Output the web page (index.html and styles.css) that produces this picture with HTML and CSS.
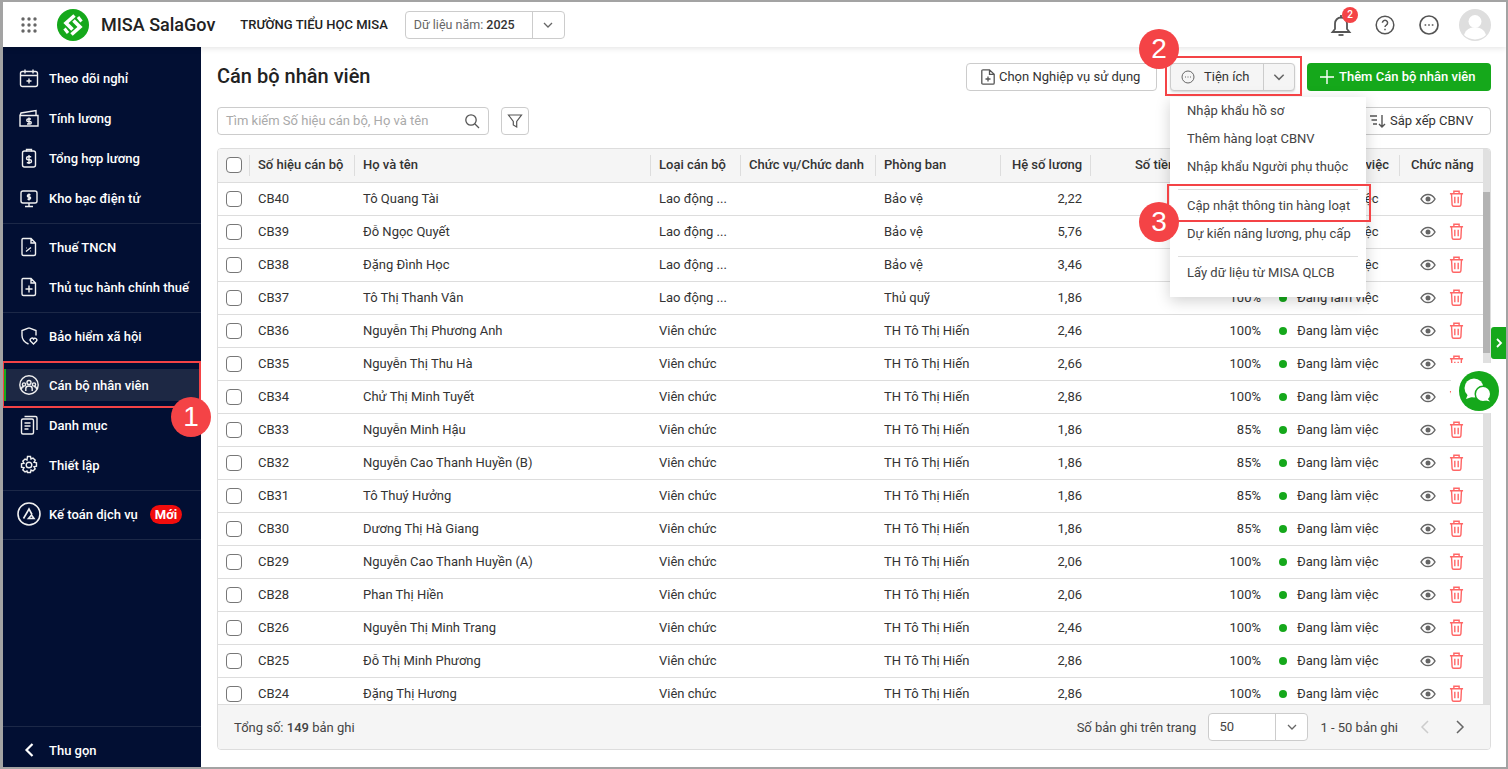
FILE: index.html
```html
<!DOCTYPE html>
<html lang="vi">
<head>
    <meta charset="UTF-8">
    <title>MISA SalaGov - Cán bộ nhân viên</title>
    <link rel="stylesheet" href="styles.css">
</head>
<body>
    <svg class="sprite" xmlns="http://www.w3.org/2000/svg">
        <symbol id="i-eye" viewBox="0 0 16 16"><path d="M1 8C2.700 5 5.100 3.400 8 3.400S13.300 5 15 8c-1.700 3-4.100 4.600-7 4.600S2.700 11 1 8z" fill="none" stroke="currentColor" stroke-width="1.500"/><circle cx="8" cy="8" r="2.500" fill="currentColor"/></symbol>
        <symbol id="i-trash" viewBox="0 0 16 18"><path d="M1 4h14M5.200 3.800V1.200h5.600v2.600M2.700 4l.6 11.500q.1 1.700 1.700 1.700h6q1.600 0 1.700-1.700L13.300 4M6.200 7v7M9.800 7v7" fill="none" stroke="currentColor" stroke-width="1.500"/></symbol>
        <symbol id="i-chev" viewBox="0 0 12 12"><path d="M2 4l4 4 4-4" fill="none" stroke="currentColor" stroke-width="1.300"/></symbol>
    </svg>

    <div class="frame">
        <header class="topbar">
            <svg class="apps" width="16" height="16" viewBox="0 0 16 16" fill="#666"><circle cx="2" cy="2" r="1.700"/><circle cx="8" cy="2" r="1.700"/><circle cx="14" cy="2" r="1.700"/><circle cx="2" cy="8" r="1.700"/><circle cx="8" cy="8" r="1.700"/><circle cx="14" cy="8" r="1.700"/><circle cx="2" cy="14" r="1.700"/><circle cx="8" cy="14" r="1.700"/><circle cx="14" cy="14" r="1.700"/></svg>
            <svg class="logo" width="32" height="32" viewBox="0 0 32 32"><circle cx="16" cy="16" r="16" fill="#15a81b"/><path d="M17.500 6.500L9 14l6.500 6.500M14.500 25.500L23 18l-6.500-6.500" fill="none" stroke="#fff" stroke-width="3.600"/><path d="M21 8l3.500 4.500M11 24l-3.500-4.500" fill="none" stroke="#fff" stroke-width="3"/></svg>
            <span class="brand">MISA SalaGov</span>
            <span class="school">TRƯỜNG TIỂU HỌC MISA</span>
            <div class="year-select">
                <span class="year-label">Dữ liệu năm: <b>2025</b></span>
                <span class="caret"><svg width="12" height="12"><use href="#i-chev"/></svg></span>
            </div>
            <div class="topbar-right">
                <div class="bell">
                    <svg width="24" height="24" viewBox="0 0 24 24" fill="none" stroke="#555" stroke-width="1.800"><path d="M3.500 19h17l-2.500-3V10.500a6 6 0 0 0-12 0V16z"/><path d="M9.500 22h5"/><path d="M12 2v2.500"/></svg>
                    <span class="badge">2</span>
                </div>
                <svg class="ic-help" width="20" height="20" viewBox="0 0 20 20" fill="none" stroke="#555" stroke-width="1.500"><circle cx="10" cy="10" r="8.800"/><path d="M7.400 7.800a2.600 2.600 0 1 1 3.900 2.300c-.9.500-1.300 1-1.300 2"/><path d="M10 13.800v1.500"/></svg>
                <svg class="ic-more" width="20" height="20" viewBox="0 0 20 20" fill="none" stroke="#555" stroke-width="1.700"><circle cx="10" cy="10" r="9"/><path d="M5.600 10h1.600M9.200 10h1.600M12.800 10h1.600"/></svg>
                <svg class="ic-user" width="32" height="32" viewBox="0 0 32 32"><circle cx="16" cy="16" r="16" fill="#dedede"/><circle cx="16" cy="12.500" r="6.500" fill="#fff"/><path d="M5 26c2-6 6-7.500 11-7.500s9 1.500 11 7.500a16 16 0 0 1-22 0z" fill="#fff"/></svg>
            </div>
        </header>

        <div class="main">
            <nav class="sidebar">
                <div class="nav-group">
                    <a class="nav-item"><svg class="nav-icon" viewBox="0 0 20 20"><rect x="1.500" y="3.500" width="17" height="15" rx="2"/><path d="M1.500 7.500h17M6 1.500v4M14 1.500v4M10 10.500v5M7.500 13h5"/></svg>Theo dõi nghỉ</a>
                    <a class="nav-item"><svg class="nav-icon" viewBox="0 0 20 20"><path d="M1 7.500h18v10.500H1zM1 7.500l1-2.500 15-2.500v5"/><path d="M10 9.500v7M12 11h-3a1.200 1.200 0 0 0 0 2.500h2a1.200 1.200 0 0 1 0 2.500H8"/></svg>Tính lương</a>
                    <a class="nav-item"><svg class="nav-icon" viewBox="0 0 20 20"><rect x="3.500" y="3" width="13" height="16" rx="2"/><path d="M7.500 3.500V1.500h5v2M10 7v9M12.200 8.800H9a1.500 1.500 0 0 0 0 3h2a1.500 1.500 0 0 1 0 3H7.800"/></svg>Tổng hợp lương</a>
                    <a class="nav-item"><svg class="nav-icon" viewBox="0 0 20 20"><rect x="2" y="3" width="16" height="12" rx="2"/><path d="M6 18.500h8M10 15v3.500M10 5.500v7M11.500 6.800H9.500a1 1 0 0 0 0 2.200h1a1 1 0 0 1 0 2.200H8.500"/></svg>Kho bạc điện tử</a>
                </div>
                <div class="nav-group">
                    <a class="nav-item"><svg class="nav-icon" viewBox="0 0 20 20"><path d="M4 1.500h8l4.500 4.500v11q0 1.500-1.500 1.500H4.500Q3 18.500 3 17V3q0-1.500 1-1.500zM12 1.500V6h4.500M7 14.500l5-4M7.500 11h.5M11.500 14h.5"/></svg>Thuế TNCN</a>
                    <a class="nav-item"><svg class="nav-icon" viewBox="0 0 20 20"><path d="M4 1.500h8l4.500 4.500v11q0 1.500-1.500 1.500H4.500Q3 18.500 3 17V3q0-1.500 1-1.500zM12 1.500V6h4.500M10 8.500v7M6.500 12h7"/></svg>Thủ tục hành chính thuế</a>
                </div>
                <div class="nav-group">
                    <a class="nav-item"><svg class="nav-icon" viewBox="0 0 20 20"><path d="M10 1.800l7 2.700v5M10 1.800L3 4.500v5c0 4 3 7 6.500 8.500"/><path d="M14.500 18l-3-3a1.800 1.800 0 0 1 3-2 1.800 1.800 0 0 1 3 2z"/></svg>Bảo hiểm xã hội</a>
                </div>
                <div class="nav-group">
                    <a class="nav-item active"><svg class="nav-icon" viewBox="0 0 20 20"><circle cx="10" cy="10" r="9.200"/><circle cx="10" cy="7.500" r="2"/><circle cx="5" cy="9.500" r="1.600"/><circle cx="15" cy="9.500" r="1.600"/><path d="M6.800 16v-2.500q0-2.500 3.200-2.500t3.200 2.500V16M2.500 14q0-2.500 2.500-2.500M17.500 14q0-2.500-2.500-2.500"/></svg>Cán bộ nhân viên</a>
                    <a class="nav-item"><svg class="nav-icon" viewBox="0 0 20 20"><rect x="2.500" y="4" width="12" height="15" rx="1.500"/><path d="M5.500 1.500h11q1.500 0 1.500 1.500v12M5.500 8h6M5.500 11h6M5.500 14h4"/></svg>Danh mục</a>
                    <a class="nav-item"><svg class="nav-icon" viewBox="0 0 20 20"><circle cx="10" cy="10" r="2.800"/><path d="M8.500 1.500h3l.5 2.500 2-1 2.200 2.200-1.200 2 2.500.6v3.400l-2.500.6 1.200 2-2.200 2.200-2-1-.5 2.500h-3L8 16l-2 1-2.200-2.200 1.200-2-2.500-.6V8.800L5 8.200l-1.200-2L6 4l2 1z"/></svg>Thiết lập</a>
                </div>
                <div class="nav-group">
                    <a class="nav-item service"><svg class="service-icon" viewBox="0 0 24 24"><circle cx="12" cy="12" r="11"/><path d="M6.500 16.500L12 7l3 5.500M11.500 16.500l3-3.500 2.500 3.500z"/></svg>Kế toán dịch vụ<span class="new-tag">Mới</span></a>
                </div>
                <a class="nav-collapse"><svg width="12" height="16" viewBox="0 0 12 16" fill="none" stroke="#fff" stroke-width="2.200"><path d="M9.500 2l-6 6 6 6"/></svg>Thu gọn</a>
            </nav>

            <section class="content">
                <div class="title-row">
                    <h1>Cán bộ nhân viên</h1>
                    <button class="btn btn-use"><svg width="14" height="16" viewBox="0 0 14 16" fill="none" stroke="#555" stroke-width="1.300"><path d="M2 .8h6.500l4.700 4.500V14q0 1.200-1.200 1.200H2Q.8 15.200.8 14V2Q.8.800 2 .8zM8.500.8v4.500h4.700M7 7.500v5M4.500 10h5"/></svg>Chọn Nghiệp vụ sử dụng</button>
                    <div class="split">
                        <button class="split-main"><svg width="14" height="14" viewBox="0 0 14 14" fill="none" stroke="#666" stroke-width="1"><circle cx="7" cy="7" r="6"/><path d="M4 7h1M6.500 7h1M9 7h1"/></svg>Tiện ích</button>
                        <button class="split-caret"><svg width="14" height="14"><use href="#i-chev"/></svg></button>
                        <ul class="menu">
                            <li>Nhập khẩu hồ sơ</li>
                            <li>Thêm hàng loạt CBNV</li>
                            <li>Nhập khẩu Người phụ thuộc</li>
                            <li class="menu-sep"></li>
                            <li>Cập nhật thông tin hàng loạt</li>
                            <li>Dự kiến nâng lương, phụ cấp</li>
                            <li class="menu-sep"></li>
                            <li>Lấy dữ liệu từ MISA QLCB</li>
                        </ul>
                    </div>
                    <button class="btn-add"><svg width="14" height="14" viewBox="0 0 14 14" stroke="#fff" stroke-width="1.400"><path d="M7 0v14M0 7h14"/></svg>Thêm Cán bộ nhân viên</button>
                </div>

                <div class="filter-row">
                    <div class="search">
                        <span>Tìm kiếm Số hiệu cán bộ, Họ và tên</span>
                        <svg width="16" height="16" viewBox="0 0 16 16" fill="none" stroke="#555" stroke-width="1.300"><circle cx="7" cy="7" r="5.200"/><path d="M11 11l4 4"/></svg>
                    </div>
                    <button class="btn-filter"><svg width="16" height="16" viewBox="0 0 16 16" fill="none" stroke="#555" stroke-width="1.200"><path d="M1.500 2h13L9.700 8.500V14l-3.400-2V8.500z"/></svg></button>
                    <button class="btn btn-sort"><svg width="16" height="14" viewBox="0 0 16 14" fill="none" stroke="#555" stroke-width="1.400"><path d="M0 2h7M1.500 6h5.500M3 10h4M12 1v12M9 10l3 3 3-3"/></svg>Sắp xếp CBNV</button>
                </div>

                <div class="table-card">
                    <div class="table-scroll">
                        <table class="staff-table">
                            <colgroup>
                                <col class="c-check"><col class="c-code"><col class="c-name"><col class="c-type"><col class="c-role"><col class="c-dept"><col class="c-coef"><col class="c-pct"><col class="c-status"><col class="c-act">
                            </colgroup>
                            <thead>
                                <tr>
                                    <th><span class="check"></span></th>
                                    <th>Số hiệu cán bộ</th>
                                    <th>Họ và tên</th>
                                    <th>Loại cán bộ</th>
                                    <th>Chức vụ/Chức danh</th>
                                    <th>Phòng ban</th>
                                    <th class="num">Hệ số lương</th>
                                    <th class="num">Số tiền/Tỷ lệ % hưởng</th>
                                    <th>Tình trạng làm việc</th>
                                    <th class="th-act">Chức năng</th>
                                </tr>
                            </thead>
                            <tbody>
                                <tr><td><span class="check"></span></td><td>CB40</td><td>Tô Quang Tài</td><td>Lao động ...</td><td></td><td>Bảo vệ</td><td class="num">2,22</td><td class="num">100%</td><td><span class="dot"></span>Đang làm việc</td><td><div class="acts"><svg class="eye"><use href="#i-eye"/></svg><svg class="trash"><use href="#i-trash"/></svg></div></td></tr>
                                <tr><td><span class="check"></span></td><td>CB39</td><td>Đỗ Ngọc Quyết</td><td>Lao động ...</td><td></td><td>Bảo vệ</td><td class="num">5,76</td><td class="num">100%</td><td><span class="dot"></span>Đang làm việc</td><td><div class="acts"><svg class="eye"><use href="#i-eye"/></svg><svg class="trash"><use href="#i-trash"/></svg></div></td></tr>
                                <tr><td><span class="check"></span></td><td>CB38</td><td>Đặng Đình Học</td><td>Lao động ...</td><td></td><td>Bảo vệ</td><td class="num">3,46</td><td class="num">100%</td><td><span class="dot"></span>Đang làm việc</td><td><div class="acts"><svg class="eye"><use href="#i-eye"/></svg><svg class="trash"><use href="#i-trash"/></svg></div></td></tr>
                                <tr><td><span class="check"></span></td><td>CB37</td><td>Tô Thị Thanh Vân</td><td>Lao động ...</td><td></td><td>Thủ quỹ</td><td class="num">1,86</td><td class="num">100%</td><td><span class="dot"></span>Đang làm việc</td><td><div class="acts"><svg class="eye"><use href="#i-eye"/></svg><svg class="trash"><use href="#i-trash"/></svg></div></td></tr>
                                <tr><td><span class="check"></span></td><td>CB36</td><td>Nguyễn Thị Phương Anh</td><td>Viên chức</td><td></td><td>TH Tô Thị Hiến</td><td class="num">2,46</td><td class="num">100%</td><td><span class="dot"></span>Đang làm việc</td><td><div class="acts"><svg class="eye"><use href="#i-eye"/></svg><svg class="trash"><use href="#i-trash"/></svg></div></td></tr>
                                <tr><td><span class="check"></span></td><td>CB35</td><td>Nguyễn Thị Thu Hà</td><td>Viên chức</td><td></td><td>TH Tô Thị Hiến</td><td class="num">2,66</td><td class="num">100%</td><td><span class="dot"></span>Đang làm việc</td><td><div class="acts"><svg class="eye"><use href="#i-eye"/></svg><svg class="trash"><use href="#i-trash"/></svg></div></td></tr>
                                <tr><td><span class="check"></span></td><td>CB34</td><td>Chử Thị Minh Tuyết</td><td>Viên chức</td><td></td><td>TH Tô Thị Hiến</td><td class="num">2,86</td><td class="num">100%</td><td><span class="dot"></span>Đang làm việc</td><td><div class="acts"><svg class="eye"><use href="#i-eye"/></svg><svg class="trash"><use href="#i-trash"/></svg></div></td></tr>
                                <tr><td><span class="check"></span></td><td>CB33</td><td>Nguyễn Minh Hậu</td><td>Viên chức</td><td></td><td>TH Tô Thị Hiến</td><td class="num">1,86</td><td class="num">85%</td><td><span class="dot"></span>Đang làm việc</td><td><div class="acts"><svg class="eye"><use href="#i-eye"/></svg><svg class="trash"><use href="#i-trash"/></svg></div></td></tr>
                                <tr><td><span class="check"></span></td><td>CB32</td><td>Nguyễn Cao Thanh Huyền (B)</td><td>Viên chức</td><td></td><td>TH Tô Thị Hiến</td><td class="num">1,86</td><td class="num">85%</td><td><span class="dot"></span>Đang làm việc</td><td><div class="acts"><svg class="eye"><use href="#i-eye"/></svg><svg class="trash"><use href="#i-trash"/></svg></div></td></tr>
                                <tr><td><span class="check"></span></td><td>CB31</td><td>Tô Thuý Hưởng</td><td>Viên chức</td><td></td><td>TH Tô Thị Hiến</td><td class="num">1,86</td><td class="num">85%</td><td><span class="dot"></span>Đang làm việc</td><td><div class="acts"><svg class="eye"><use href="#i-eye"/></svg><svg class="trash"><use href="#i-trash"/></svg></div></td></tr>
                                <tr><td><span class="check"></span></td><td>CB30</td><td>Dương Thị Hà Giang</td><td>Viên chức</td><td></td><td>TH Tô Thị Hiến</td><td class="num">1,86</td><td class="num">85%</td><td><span class="dot"></span>Đang làm việc</td><td><div class="acts"><svg class="eye"><use href="#i-eye"/></svg><svg class="trash"><use href="#i-trash"/></svg></div></td></tr>
                                <tr><td><span class="check"></span></td><td>CB29</td><td>Nguyễn Cao Thanh Huyền (A)</td><td>Viên chức</td><td></td><td>TH Tô Thị Hiến</td><td class="num">2,06</td><td class="num">100%</td><td><span class="dot"></span>Đang làm việc</td><td><div class="acts"><svg class="eye"><use href="#i-eye"/></svg><svg class="trash"><use href="#i-trash"/></svg></div></td></tr>
                                <tr><td><span class="check"></span></td><td>CB28</td><td>Phan Thị Hiền</td><td>Viên chức</td><td></td><td>TH Tô Thị Hiến</td><td class="num">2,06</td><td class="num">100%</td><td><span class="dot"></span>Đang làm việc</td><td><div class="acts"><svg class="eye"><use href="#i-eye"/></svg><svg class="trash"><use href="#i-trash"/></svg></div></td></tr>
                                <tr><td><span class="check"></span></td><td>CB26</td><td>Nguyễn Thị Minh Trang</td><td>Viên chức</td><td></td><td>TH Tô Thị Hiến</td><td class="num">2,46</td><td class="num">100%</td><td><span class="dot"></span>Đang làm việc</td><td><div class="acts"><svg class="eye"><use href="#i-eye"/></svg><svg class="trash"><use href="#i-trash"/></svg></div></td></tr>
                                <tr><td><span class="check"></span></td><td>CB25</td><td>Đỗ Thị Minh Phương</td><td>Viên chức</td><td></td><td>TH Tô Thị Hiến</td><td class="num">2,86</td><td class="num">100%</td><td><span class="dot"></span>Đang làm việc</td><td><div class="acts"><svg class="eye"><use href="#i-eye"/></svg><svg class="trash"><use href="#i-trash"/></svg></div></td></tr>
                                <tr><td><span class="check"></span></td><td>CB24</td><td>Đặng Thị Hương</td><td>Viên chức</td><td></td><td>TH Tô Thị Hiến</td><td class="num">2,86</td><td class="num">100%</td><td><span class="dot"></span>Đang làm việc</td><td><div class="acts"><svg class="eye"><use href="#i-eye"/></svg><svg class="trash"><use href="#i-trash"/></svg></div></td></tr>
                            </tbody>
                        </table>
                        <div class="scrollbar"><div class="thumb"></div></div>
                    </div>
                    <div class="table-footer">
                        <span>Tổng số: <b>149</b> bản ghi</span>
                        <span class="page-label">Số bản ghi trên trang</span>
                        <div class="page-select">
                            <span class="page-size">50</span>
                            <span class="caret"><svg width="12" height="12"><use href="#i-chev"/></svg></span>
                        </div>
                        <span class="page-range">1 - 50 bản ghi</span>
                        <svg class="page-prev" width="12" height="16" viewBox="0 0 12 16" fill="none" stroke="#ccc" stroke-width="1.500"><path d="M9 2L3 8l6 6"/></svg>
                        <svg class="page-next" width="12" height="16" viewBox="0 0 12 16" fill="none" stroke="#666" stroke-width="1.500"><path d="M3 2l6 6-6 6"/></svg>
                    </div>
                </div>
            </section>
        </div>

        <!-- floating widgets on the right edge -->
        <div class="side-tab"><svg width="8" height="12" viewBox="0 0 8 12" fill="none" stroke="#fff" stroke-width="1.800"><path d="M2 2l4 4-4 4"/></svg></div>
        <div class="chat-box">
            <div class="chat-btn">
                <svg width="40" height="40" viewBox="0 0 40 40"><circle cx="15" cy="17" r="9.500" fill="#fff"/><path d="M9 23l-2 5 6-2z" fill="#fff"/><circle cx="24" cy="23" r="8.500" fill="#15a81b"/><circle cx="24" cy="23" r="7" fill="#fff"/><path d="M28 27l3 3.500-6-1.500z" fill="#fff"/></svg>
            </div>
        </div>

        <!-- tutorial annotations -->
        <div class="mark mark-nav"></div>
        <div class="mark mark-tools"></div>
        <div class="mark mark-update"></div>
        <div class="step step-1">1</div>
        <div class="step step-2">2</div>
        <div class="step step-3">3</div>
    </div>
</body>
</html>
```

FILE: styles.css
```css
* {
    margin: 0;
    padding: 0;
    box-sizing: border-box;
}

body {
    font-family: Roboto, "Liberation Sans", sans-serif;
    font-size: 13px;
    color: #333;
    background: #fff;
    overflow: hidden;
}

.sprite {
    display: none;
}

button {
    font-family: inherit;
    font-size: 13px;
    color: #333;
    cursor: pointer;
}

.frame {
    position: relative;
    width: 1508px;
    height: 769px;
    border: 2px solid #a3a3a3;
    border-left-width: 3px;
    display: flex;
    flex-direction: column;
    background: #fff;
    overflow: hidden;
}

/* top bar */
.topbar {
    flex: none;
    height: 45px;
    display: flex;
    align-items: center;
    padding-left: 18px;
    padding-right: 15px;
    background: #fff;
    box-shadow: 0 1px 6px rgba(0, 0, 0, 0.12);
    position: relative;
    z-index: 1;
}

.logo {
    margin-left: 20px;
}

.brand {
    margin-left: 12px;
    font-size: 18px;
    font-weight: 500;
    color: #222;
}

.school {
    margin-left: 25px;
    font-weight: 500;
    color: #222;
}

.year-select {
    margin-left: 17px;
    width: 160px;
    height: 28px;
    display: flex;
    border: 1px solid #ccc;
    border-radius: 4px;
}

.year-label {
    flex: 1;
    padding-left: 8px;
    line-height: 26px;
    color: #666;
    font-size: 12.500px;
}

.year-label b {
    font-weight: 500;
    color: #333;
}

.caret {
    flex: none;
    width: 32px;
    display: flex;
    align-items: center;
    justify-content: center;
    border-left: 1px solid #ccc;
    color: #666;
}

.topbar-right {
    margin-left: auto;
    display: flex;
    align-items: center;
}

.bell {
    position: relative;
    width: 24px;
    height: 24px;
}

.ic-help {
    margin-left: 22px;
}

.ic-more {
    margin-left: 24px;
}

.ic-user {
    margin-left: 20px;
}

.badge {
    position: absolute;
    top: -6px;
    right: -5px;
    width: 16px;
    height: 16px;
    border-radius: 50%;
    background: #f44346;
    color: #fff;
    font-size: 10px;
    font-weight: 500;
    line-height: 16px;
    text-align: center;
}

/* sidebar */
.main {
    flex: 1;
    display: flex;
    min-height: 0;
}

.sidebar {
    flex: none;
    width: 198px;
    padding-top: 8px;
    display: flex;
    flex-direction: column;
    background: #020f33;
    color: #fff;
}

.nav-group {
    padding: 3px 0 5px;
    border-bottom: 1px solid #1c2847;
}

.nav-item {
    height: 40px;
    padding-left: 16px;
    display: flex;
    align-items: center;
    gap: 10px;
    font-weight: 500;
    color: #fff;
    white-space: nowrap;
}

.nav-item.active {
    height: 32px;
    margin: 4px 0;
    padding-left: 13px;
    background: #1d2844;
    border-left: 3px solid #15a81b;
}

.nav-icon,
.service-icon {
    flex: none;
    width: 20px;
    height: 20px;
    fill: none;
    stroke: #f0f0f0;
    stroke-width: 1.400;
}

.service-icon {
    width: 24px;
    height: 24px;
    margin-left: -2px;
    margin-right: -2px;
    stroke-width: 1.600;
}

.new-tag {
    margin-left: 2px;
    padding: 0 5px;
    height: 19px;
    line-height: 19px;
    border-radius: 10px;
    background: #f20d0d;
    font-weight: 700;
}

.service .new-tag {
    margin-left: 2px;
}

.nav-collapse {
    margin-top: auto;
    height: 41px;
    padding: 6px 0 0 20px;
    display: flex;
    align-items: center;
    gap: 14px;
    border-top: 1px solid #1c2847;
    font-weight: 500;
    color: #fff;
}

/* content */
.content {
    flex: 1;
    min-width: 0;
    padding: 16px 15px 17px 16px;
    display: flex;
    flex-direction: column;
}

.title-row,
.filter-row {
    flex: none;
    height: 28px;
    display: flex;
    align-items: center;
}

h1 {
    font-size: 20px;
    font-weight: 500;
    color: #222;
    margin-right: auto;
    padding-bottom: 2px;
}

.btn {
    height: 28px;
    padding-bottom: 2px;
    display: flex;
    align-items: center;
    gap: 4px;
    background: #fff;
    border: 1px solid #ccc;
    border-radius: 4px;
}

.btn svg {
    margin-top: 2px;
}

.btn-use {
    width: 191px;
    padding-left: 14px;
}

.split {
    position: relative;
    margin-left: 13px;
    width: 125px;
    height: 28px;
    display: flex;
    background: #f5f5f5;
    border: 1px solid #ccc;
    border-radius: 4px;
    box-shadow: 0 1px 2px rgba(0, 0, 0, 0.15);
}

.split-main {
    flex: 1;
    padding: 0 0 2px 10px;
    display: flex;
    align-items: center;
    gap: 9px;
    border: none;
    background: none;
}

.split-main svg {
    margin-top: 2px;
}

.split-caret {
    flex: none;
    width: 31px;
    display: flex;
    align-items: center;
    justify-content: center;
    border: none;
    border-left: 1px solid #ccc;
    background: none;
    color: #666;
}

.menu {
    position: absolute;
    top: 33px;
    left: -1px;
    width: 196px;
    height: 200px;
    list-style: none;
    background: #fff;
    box-shadow: 0 4px 14px rgba(0, 0, 0, 0.18);
    z-index: 3;
}

.menu li {
    height: 28px;
    line-height: 28px;
    padding-left: 17px;
    color: #444;
}

.menu .menu-sep {
    height: 1px;
    margin: 8px 8px 2px;
    padding: 0;
    background: #ddd;
}

.btn-add {
    margin-left: 12px;
    width: 184px;
    height: 28px;
    padding: 0 0 2px 13px;
    display: flex;
    align-items: center;
    gap: 5px;
    border: none;
    border-radius: 4px;
    background: #15a81b;
    color: #fff;
    font-weight: 500;
}

.btn-add svg {
    margin-top: 2px;
}

.filter-row {
    margin-top: 16px;
}

.search {
    width: 272px;
    height: 28px;
    padding: 0 8px 2px;
    display: flex;
    align-items: center;
    justify-content: space-between;
    border: 1px solid #ccc;
    border-radius: 4px;
    color: #aaa;
}

.search svg {
    margin-top: 2px;
}

.btn-filter {
    margin-left: 12px;
    width: 28px;
    height: 28px;
    display: flex;
    align-items: center;
    justify-content: center;
    border: 1px solid #ccc;
    border-radius: 4px;
    background: #fff;
}

.btn-sort {
    margin-left: auto;
    width: 133px;
    padding-left: 11px;
}

/* table */
.table-card {
    flex: 1;
    min-height: 0;
    margin-top: 13px;
    display: flex;
    flex-direction: column;
    border: 1px solid #ddd;
    border-radius: 4px;
    overflow: hidden;
}

.table-scroll {
    flex: 1;
    min-height: 0;
    display: flex;
    overflow: hidden;
}

.staff-table {
    flex: none;
    width: 1265px;
    height: 0;
    table-layout: fixed;
    border-collapse: collapse;
}

.c-check { width: 32px; }
.c-code { width: 105px; }
.c-name { width: 296px; }
.c-type { width: 90px; }
.c-role { width: 135px; }
.c-dept { width: 125px; }
.c-coef { width: 90px; }
.c-pct { width: 179px; }
.c-status { width: 130px; }
.c-act { width: 83px; }

.staff-table th {
    position: relative;
    height: 33px;
    padding: 0 8px 2px;
    background: #f5f5f5;
    border-bottom: 1px solid #ddd;
    text-align: left;
    font-weight: 500;
    color: #333;
    white-space: nowrap;
}

.staff-table th::after {
    content: "";
    position: absolute;
    right: 0;
    top: 6px;
    bottom: 6px;
    width: 1px;
    background: #ddd;
}

.staff-table th:last-child::after {
    display: none;
}

.staff-table th .check {
    margin-top: 2px;
}

.staff-table td {
    height: 33px;
    padding: 0 8px;
    border-bottom: 1px solid #ddd;
    white-space: nowrap;
    overflow: hidden;
}

.staff-table .num {
    text-align: right;
    padding-right: 9px;
}

.staff-table .th-act {
    padding-left: 11px;
}

.check {
    display: block;
    width: 16px;
    height: 16px;
    border: 1px solid #777;
    border-radius: 4px;
    background: #fff;
}

.dot {
    display: inline-block;
    width: 8px;
    height: 8px;
    margin: 0 10px 0 1px;
    border-radius: 50%;
    background: #15a81b;
}

.acts {
    display: flex;
    align-items: center;
    gap: 13px;
    padding-left: 12px;
}

.eye {
    width: 16px;
    height: 16px;
    color: #666;
}

.trash {
    width: 15px;
    height: 17px;
    color: #f66;
}

.scrollbar {
    flex: none;
    width: 8px;
    background: #e0e0e0;
}

.thumb {
    height: 161px;
    margin-top: 43px;
    background: #b3b3b3;
}

.table-footer {
    flex: none;
    height: 45px;
    padding: 0 24px 0 16px;
    display: flex;
    align-items: center;
    background: #f5f5f5;
    border-top: 1px solid #ddd;
    color: #444;
}

.table-footer b {
    font-weight: 500;
}

.page-label {
    margin-left: auto;
}

.page-select {
    margin-left: 12px;
    width: 100px;
    height: 28px;
    display: flex;
    background: #fff;
    border: 1px solid #ccc;
    border-radius: 4px;
}

.page-size {
    flex: 1;
    padding-left: 10px;
    line-height: 26px;
}

.page-range {
    margin-left: 12px;
}

.page-prev {
    margin-left: 21px;
}

.page-next {
    margin-left: 23px;
}

/* floating bits */
.side-tab {
    position: absolute;
    right: 0;
    top: 325px;
    width: 15px;
    height: 32px;
    display: flex;
    align-items: center;
    justify-content: center;
    background: #15a81b;
    border-radius: 3px 0 0 3px;
}

.chat-box {
    position: absolute;
    left: 1448px;
    top: 361px;
    width: 40px;
    height: 50px;
    background: #fff;
}

.chat-btn {
    position: absolute;
    left: 8px;
    top: 8px;
    width: 40px;
    height: 40px;
    border-radius: 50%;
    background: #15a81b;
}

.mark {
    position: absolute;
    border: 2px solid #f44346;
    z-index: 4;
}

.mark-nav {
    left: -1px;
    top: 359px;
    width: 199px;
    height: 47px;
}

.mark-tools {
    left: 1162px;
    top: 54px;
    width: 137px;
    height: 40px;
}

.mark-update {
    left: 1164px;
    top: 182px;
    width: 204px;
    height: 38px;
}

.step {
    position: absolute;
    width: 40px;
    height: 40px;
    border-radius: 50%;
    background: #f44346;
    color: #fff;
    font-family: "Liberation Sans", sans-serif;
    font-size: 28px;
    line-height: 40px;
    text-align: center;
    z-index: 5;
}

.step-1 {
    left: 168px;
    top: 395px;
}

.step-2 {
    left: 1136px;
    top: 27px;
}

.step-3 {
    left: 1136px;
    top: 200px;
}
```
